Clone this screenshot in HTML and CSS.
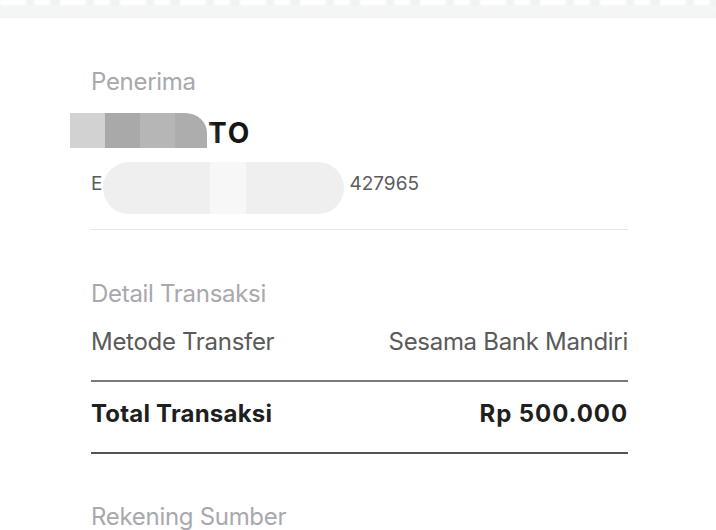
FILE: index.html
```html
<!DOCTYPE html>
<html lang="id">
<head>
<meta charset="utf-8">
<title>Detail Transaksi</title>
<link rel="stylesheet" href="styles.css">
</head>
<body>
<div class="topstrip"><div class="dashes"></div></div>
<main class="content">
  <section class="recipient">
    <div class="label">Penerima</div>
    <div class="name"><span class="redacted name-hidden" aria-hidden="true"></span>TO</div>
    <div class="account">E<span class="redacted acct-hidden" aria-hidden="true"></span>427965</div>
    <div class="mask mask-name">
      <span class="px px1"></span><span class="px px2"></span><span class="px px3"></span><span class="px px4"></span>
    </div>
    <div class="mask mask-acct"><span class="light"></span></div>
  </section>
  <section class="details">
    <div class="label">Detail Transaksi</div>
    <div class="row">
      <span>Metode Transfer</span>
      <span>Sesama Bank Mandiri</span>
    </div>
    <div class="row total">
      <span>Total Transaksi</span>
      <span class="amount">Rp 500.000</span>
    </div>
    <div class="label source">Rekening Sumber</div>
  </section>
</main>
</body>
</html>
```
FILE: styles.css
```css
* { box-sizing: border-box; }
html, body { margin: 0; background: #ffffff; }
body {
  font-family: Inter, "Noto Sans", "Liberation Sans", sans-serif;
  width: 716px;
  height: 530px;
  overflow: hidden;
}
.topstrip {
  height: 18px;
  background: linear-gradient(#f5f6f7, #f3f4f4);
}
.dashes {
  height: 5px;
  background: repeating-linear-gradient(90deg, #ffffff 0 26px, #eef1f3 26px 34px, #ffffff 34px 50px, #eef1f3 50px 60px);
  filter: blur(1px);
}
.content {
  padding: 49px 88px 0 91px;
}
.recipient {
  position: relative;
  padding-bottom: 32px;
  border-bottom: 1.5px solid #e4e4e6;
}
.label {
  font-size: 24px;
  line-height: 30px;
  color: #a8a8ad;
  letter-spacing: -0.3px;
}
.name {
  margin-top: 19px;
  font-size: 28px;
  line-height: 34px;
  font-weight: 700;
  color: #151515;
  letter-spacing: 2px;
  white-space: nowrap;
}
.account {
  margin-top: 21px;
  font-size: 19px;
  line-height: 26px;
  color: #5c5c5c;
  white-space: nowrap;
}
.redacted {
  display: inline-block;
  vertical-align: top;
  height: 1em;
}
.name-hidden { width: 117px; }
.acct-hidden { width: 247px; }
.mask { position: absolute; display: flex; }
.mask-name {
  left: -21px;
  top: 46px;
  width: 137px;
  height: 35px;
  border-top-right-radius: 22px 20px;
  overflow: hidden;
  box-shadow: 0 6px 10px 4px rgba(255,255,255,0.9);
}
.px { flex: 0 0 35px; height: 100%; }
.px1 { background: #d2d2d2; }
.px2 { background: #a9a9a9; }
.px3 { background: #b6b6b6; }
.px4 { background: #adadad; flex-basis: 32px; }
.mask-acct {
  left: 12px;
  top: 95px;
  width: 241px;
  height: 52px;
  border-radius: 26px;
  background: #efefef;
}
.mask-acct .light {
  margin-left: 107px;
  width: 36px;
  height: 100%;
  background: #f7f7f7;
}
.details {
  padding-top: 49px;
}
.row {
  display: flex;
  justify-content: space-between;
  margin-top: 18px;
  padding-bottom: 23px;
  font-size: 24px;
  line-height: 30px;
  color: #5a5a5a;
  letter-spacing: -0.3px;
  border-bottom: 2px solid #7a7a7a;
}
.row.total {
  margin-top: 17px;
  font-weight: 700;
  color: #1f1f1f;
  letter-spacing: 0.2px;
  border-bottom: 2.5px solid #555555;
}
.row.total .amount {
  letter-spacing: 0.9px;
}
.label.source {
  margin-top: 48px;
}
```
